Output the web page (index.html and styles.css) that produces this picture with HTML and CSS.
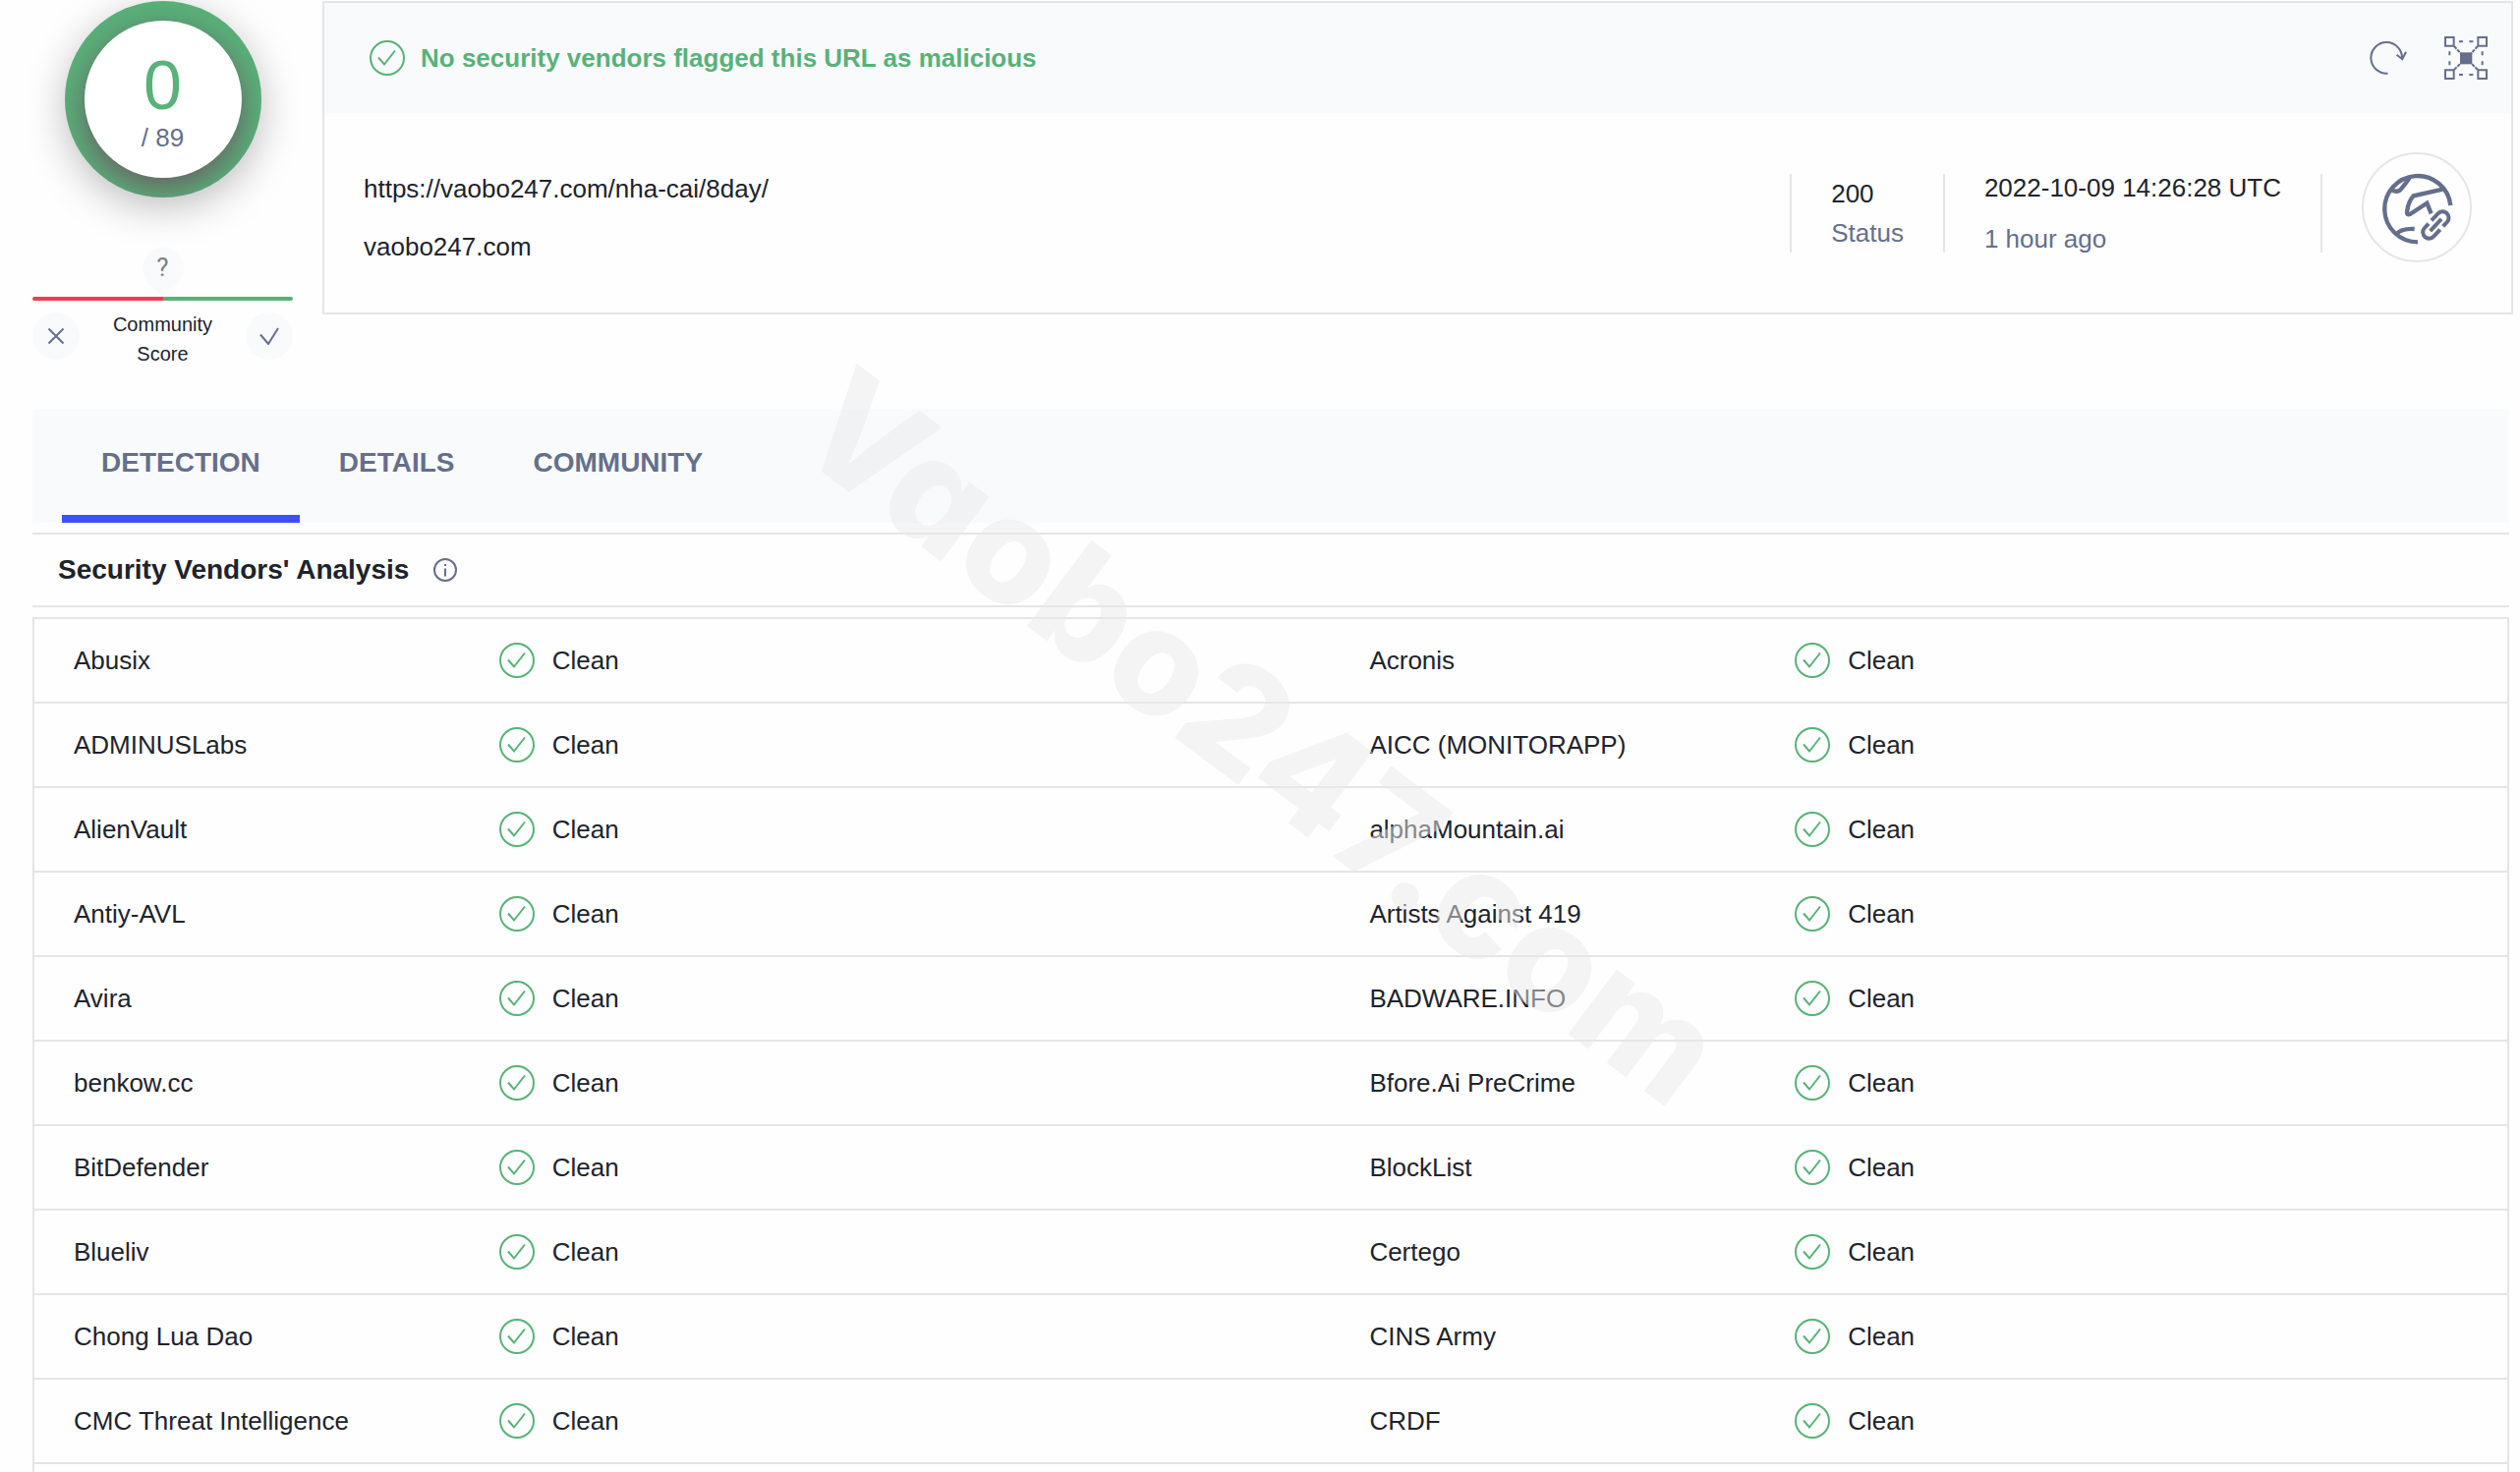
FILE: index.html
```html
<!DOCTYPE html>
<html lang="en">
<head>
<meta charset="utf-8">
<title>URL report - vaobo247.com</title>
<link rel="stylesheet" href="styles.css">
</head>
<body>
<svg class="sprite" aria-hidden="true">
  <symbol id="ok" viewBox="0 0 36 36">
    <circle cx="18" cy="18" r="17"/>
    <path d="M9 17.500 15 24.500 26 10.500"/>
  </symbol>
</svg>

<header class="summary">
  <section class="score">
    <div class="ring">
      <div class="ring-inner">
        <span class="positives">0</span>
        <span class="total">/ 89</span>
      </div>
    </div>
    <div class="pin">
      <svg class="pin-shape" viewBox="0 0 42 50" aria-hidden="true"><path d="M21 50C17 45 0 36 0 21a21 21 0 0 1 42 0C42 36 25 45 21 50z"/></svg>
      <span class="pin-label">?</span>
    </div>
    <div class="bar"><span class="bar-bad"></span><span class="bar-good"></span></div>
    <div class="vote">
      <button class="vote-button" type="button" aria-label="Vote malicious">
        <svg class="line-icon" width="18" height="18" viewBox="0 0 18 18"><path d="M1.500 1.500l15 15M16.500 1.500l-15 15"/></svg>
      </button>
      <span class="vote-label">Community<br>Score</span>
      <button class="vote-button" type="button" aria-label="Vote harmless">
        <svg class="line-icon" width="20" height="18" viewBox="0 0 20 18"><path d="M1 7.500 9 17 19 1"/></svg>
      </button>
    </div>
  </section>

  <section class="card">
    <div class="card-head">
      <svg class="ok"><use href="#ok"/></svg>
      <strong class="verdict">No security vendors flagged this URL as malicious</strong>
      <button class="icon-button" type="button" aria-label="Reanalyze">
        <svg class="slate-icon" width="38" height="34" viewBox="0 0 113 101"><path stroke-width="6" d="M55 97A47 47 0 1 1 98 52M82 41 99 54 110 32"/></svg>
      </button>
      <button class="icon-button" type="button" aria-label="Open graph">
        <svg class="slate-icon" width="44" height="44" viewBox="0 0 132 132">
          <path stroke-width="6" d="M3 3h26v26H3zM103 3h26v26h-26zM3 103h26v26H3zM103 103h26v26h-26z"/>
          <path stroke-width="6" d="M45 16h12M76 16h12M45 117h12M76 117h12M16 46v12M16 76v12M116 46v12M116 76v12"/>
          <path stroke-width="6" stroke-dasharray="11 3" d="M30 30 50 52M102 30 82 52M30 102 50 82M102 102 82 82"/>
          <path class="slate-fill" d="M48 49h37v36H48z"/>
        </svg>
      </button>
    </div>
    <div class="card-body">
      <div class="urls">
        <div>https://vaobo247.com/nha-cai/8day/</div>
        <div>vaobo247.com</div>
      </div>
      <div class="fact">
        <span>200</span>
        <span class="muted">Status</span>
      </div>
      <div class="fact fact-date">
        <span>2022-10-09 14:26:28 UTC</span>
        <span class="muted">1 hour ago</span>
      </div>
      <div class="fact fact-icon"></div>
      <div class="globe">
        <svg class="slate-icon" width="108" height="108" viewBox="6 6 324 324" aria-hidden="true">
          <g stroke-width="13">
            <path d="M171 274A101 101 0 1 1 271 162"/>
            <path d="M86 113Q108 126 120 112Q132 98 146 78"/>
            <path d="M247 113 158 133Q142 150 138 182Q137 192 147 189L199 155 212 187"/>
            <path d="M106 250Q120 232 161 234"/>
          </g>
          <g stroke-width="12" transform="translate(226 222) rotate(-47)">
            <path d="M1-19H30A19 19 0 0 1 30 19H12M-1 19H-30A19 19 0 0 1-30-19H-12M-25 0H25"/>
          </g>
        </svg>
      </div>
    </div>
  </section>
</header>

<main class="report">
  <nav class="tabs">
    <a class="tab tab-active" href="#detection">DETECTION</a>
    <a class="tab" href="#details">DETAILS</a>
    <a class="tab" href="#community">COMMUNITY</a>
  </nav>

  <div class="section-title" id="detection">
    <h2>Security Vendors' Analysis</h2>
    <svg class="info" width="24" height="24" viewBox="0 0 24 24" aria-hidden="true"><circle cx="12" cy="12" r="11"/><path d="M12 10.500v8M12 6v2"/></svg>
  </div>

  <div class="results">
    <table class="vendors">
      <colgroup><col class="col-name"><col class="col-result"><col class="col-name"><col></colgroup>
      <tbody>
        <tr><td>Abusix</td><td><span class="clean"><svg class="ok"><use href="#ok"/></svg>Clean</span></td><td>Acronis</td><td><span class="clean"><svg class="ok"><use href="#ok"/></svg>Clean</span></td></tr>
        <tr><td>ADMINUSLabs</td><td><span class="clean"><svg class="ok"><use href="#ok"/></svg>Clean</span></td><td>AICC (MONITORAPP)</td><td><span class="clean"><svg class="ok"><use href="#ok"/></svg>Clean</span></td></tr>
        <tr><td>AlienVault</td><td><span class="clean"><svg class="ok"><use href="#ok"/></svg>Clean</span></td><td>alphaMountain.ai</td><td><span class="clean"><svg class="ok"><use href="#ok"/></svg>Clean</span></td></tr>
        <tr><td>Antiy-AVL</td><td><span class="clean"><svg class="ok"><use href="#ok"/></svg>Clean</span></td><td>Artists Against 419</td><td><span class="clean"><svg class="ok"><use href="#ok"/></svg>Clean</span></td></tr>
        <tr><td>Avira</td><td><span class="clean"><svg class="ok"><use href="#ok"/></svg>Clean</span></td><td>BADWARE.INFO</td><td><span class="clean"><svg class="ok"><use href="#ok"/></svg>Clean</span></td></tr>
        <tr><td>benkow.cc</td><td><span class="clean"><svg class="ok"><use href="#ok"/></svg>Clean</span></td><td>Bfore.Ai PreCrime</td><td><span class="clean"><svg class="ok"><use href="#ok"/></svg>Clean</span></td></tr>
        <tr><td>BitDefender</td><td><span class="clean"><svg class="ok"><use href="#ok"/></svg>Clean</span></td><td>BlockList</td><td><span class="clean"><svg class="ok"><use href="#ok"/></svg>Clean</span></td></tr>
        <tr><td>Blueliv</td><td><span class="clean"><svg class="ok"><use href="#ok"/></svg>Clean</span></td><td>Certego</td><td><span class="clean"><svg class="ok"><use href="#ok"/></svg>Clean</span></td></tr>
        <tr><td>Chong Lua Dao</td><td><span class="clean"><svg class="ok"><use href="#ok"/></svg>Clean</span></td><td>CINS Army</td><td><span class="clean"><svg class="ok"><use href="#ok"/></svg>Clean</span></td></tr>
        <tr><td>CMC Threat Intelligence</td><td><span class="clean"><svg class="ok"><use href="#ok"/></svg>Clean</span></td><td>CRDF</td><td><span class="clean"><svg class="ok"><use href="#ok"/></svg>Clean</span></td></tr>
      </tbody>
    </table>
  </div>
</main>

<div class="watermark" aria-hidden="true">Vaobo247.com</div>
</body>
</html>
```

FILE: styles.css
```css
:root {
  --green: #58b279;
  --red: #ea3f52;
  --blue: #3f4ff7;
  --slate: #656f8b;
  --ink: #20232b;
  --line: #e5e5e5;
  --panel: #f9fafc;
}

* {
  box-sizing: border-box;
}

body {
  position: relative;
  display: flex;
  flex-direction: column;
  min-height: 100vh;
  margin: 0;
  padding: 1px 7px 0 33px;
  background: #fefefe;
  color: var(--ink);
  font: 26px/30px "Liberation Sans", Arial, sans-serif;
}

button {
  display: flex;
  align-items: center;
  justify-content: center;
  border: 0;
  padding: 0;
  background: none;
  cursor: pointer;
}

svg {
  display: block;
  flex: none;
}

.sprite {
  position: absolute;
  width: 0;
  height: 0;
}

.ok {
  width: 36px;
  height: 36px;
  fill: none;
  stroke: var(--green);
  stroke-width: 2;
}

.line-icon {
  fill: none;
  stroke: var(--slate);
  stroke-width: 2;
}

.slate-icon {
  fill: none;
  stroke: var(--slate);
}

.slate-fill {
  fill: var(--slate);
  stroke: none;
}

.muted {
  color: var(--slate);
}

/* Summary */

.summary {
  display: flex;
  align-items: flex-start;
  gap: 30px;
}

.score {
  display: flex;
  flex: none;
  flex-direction: column;
  align-items: center;
  width: 265px;
}

.ring {
  width: 200px;
  height: 200px;
  padding: 20px;
  border-radius: 50%;
  background: var(--green);
  box-shadow: 0 10px 40px rgba(0, 0, 0, 0.26);
  overflow: hidden;
}

.ring-inner {
  display: flex;
  flex-direction: column;
  align-items: center;
  height: 160px;
  padding-top: 31px;
  border-radius: 50%;
  background: #fff;
  box-shadow: 0 10px 32px rgba(106, 86, 98, 0.95);
}

.positives {
  color: var(--green);
  font-size: 70px;
  line-height: 70px;
}

.total {
  margin-top: 3px;
  color: var(--slate);
}

.pin {
  display: grid;
  justify-items: center;
  margin-top: 51px;
}

.pin-shape {
  grid-area: 1 / 1;
  width: 42px;
  height: 50px;
  fill: var(--panel);
}

.pin-label {
  grid-area: 1 / 1;
  padding-top: 5px;
  color: #808080;
  font-family: Roboto, sans-serif;
}

.bar {
  display: flex;
  width: 100%;
  height: 4px;
  border-radius: 2px;
  overflow: hidden;
}

.bar-bad {
  flex: 1;
  background: var(--red);
}

.bar-good {
  flex: 1;
  background: var(--green);
}

.vote {
  display: flex;
  align-items: center;
  justify-content: space-between;
  width: 100%;
  margin-top: 9px;
}

.vote-button {
  width: 48px;
  height: 48px;
  margin-bottom: 6px;
  border-radius: 50%;
  background: var(--panel);
}

.vote-label {
  font-size: 20px;
  text-align: center;
}

.card {
  flex: 1;
  border: 2px solid var(--line);
}

.card-head {
  display: flex;
  align-items: center;
  gap: 16px;
  height: 112px;
  padding: 0 24px 0 46px;
  background: var(--panel);
}

.verdict {
  flex: 1;
  color: var(--green);
}

.icon-button + .icon-button {
  margin-left: 22px;
}

.card-body {
  display: flex;
  align-items: flex-start;
  padding: 40px 40px 37px;
}

.urls {
  flex: 1;
  margin-top: 8px;
  line-height: 59px;
}

.fact {
  display: flex;
  flex-direction: column;
  justify-content: center;
  height: 80px;
  margin-top: 22px;
  padding: 0 40px;
  border-left: 2px solid var(--line);
  line-height: 40px;
  white-space: nowrap;
}

.fact-date {
  line-height: 52px;
}

.fact-icon {
  padding: 0 0 0 40px;
}

.globe {
  width: 112px;
  height: 112px;
  border: 2px solid var(--line);
  border-radius: 50%;
}

/* Report */

.report {
  display: flex;
  flex: 1;
  flex-direction: column;
  margin: 41px 4px 0 0;
}

.tabs {
  display: flex;
  height: 116px;
  padding-left: 30px;
  background: var(--panel);
}

.tab {
  padding: 39px 40px 0;
  border-bottom: 8px solid transparent;
  color: var(--slate);
  font-size: 28px;
  font-weight: bold;
  line-height: 32px;
  text-decoration: none;
}

.tab-active {
  border-color: var(--blue);
}

.section-title {
  display: flex;
  align-items: center;
  gap: 25px;
  height: 76px;
  margin: 10px 0;
  padding-left: 26px;
  border-top: 2px solid var(--line);
  border-bottom: 2px solid var(--line);
}

h2 {
  margin: 0;
  font-size: 28px;
  line-height: 32px;
}

.info {
  fill: none;
  stroke: var(--slate);
  stroke-width: 2;
}

.results {
  flex: 1;
  border: 2px solid var(--line);
  border-bottom: 0;
}

.vendors {
  width: 100%;
  border-spacing: 0;
  table-layout: fixed;
}

.col-name {
  width: 17.2%;
}

.col-result {
  width: 35.2%;
}

.vendors td {
  height: 86px;
  padding: 0 0 0 40px;
  border-bottom: 2px solid var(--line);
}

.clean {
  display: flex;
  align-items: center;
  gap: 18px;
}

.watermark {
  position: absolute;
  top: 352px;
  left: 881px;
  color: rgba(233, 233, 233, 0.5);
  font: 800 150px/150px Inter, sans-serif;
  font-feature-settings: "cv11";
  pointer-events: none;
  transform: rotate(37deg);
  transform-origin: 0 0;
  white-space: nowrap;
}
```
